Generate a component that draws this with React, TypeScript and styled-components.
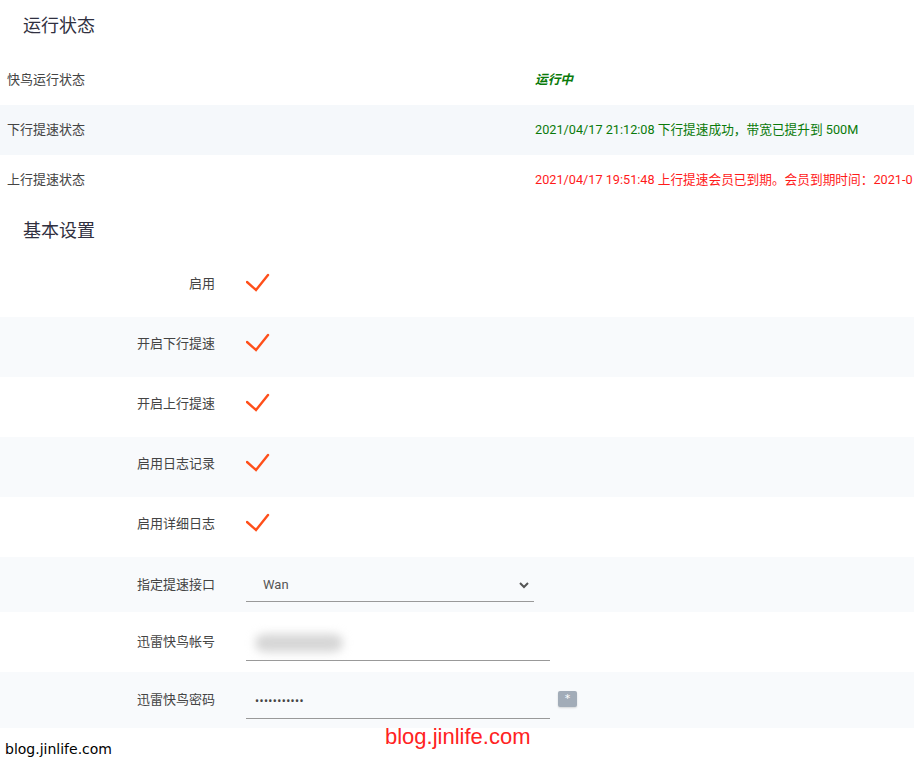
import React from 'react'
import styled, { createGlobalStyle } from 'styled-components'

const GlobalStyle = createGlobalStyle`
  html, body {
    margin: 0;
    padding: 0;
    background: #fff;
    overflow: hidden;
  }
  body {
    font-family: "Roboto", "Noto Sans CJK SC", sans-serif;
    color: #333;
  }
`

const Page = styled.div`
  position: relative;
  width: 914px;
  height: 766px;
  overflow: hidden;
`

const SectionTitle = styled.h3<{ $height: number }>`
  margin: 0;
  height: ${p => p.$height}px;
  padding: 0 0 0 23px;
  font-size: 18px;
  font-weight: 400;
  line-height: 48px;
  color: #303040;
  font-family: "Noto Sans CJK SC", sans-serif;
  box-sizing: border-box;
`

const StatusRow = styled.div<{ $striped?: boolean }>`
  display: grid;
  grid-template-columns: 535px 1fr;
  align-items: center;
  height: 50px;
  padding-bottom: 4px;
  box-sizing: border-box;
  background: ${p => (p.$striped ? '#f5f8fb' : '#fff')};
  white-space: nowrap;
`

const StatusLabel = styled.div`
  padding-left: 7px;
  font-size: 13px;
  color: #444;
  font-family: "Noto Sans CJK SC", sans-serif;
`

const StatusValue = styled.div<{ $tone: 'green' | 'red' | 'running' }>`
  font-size: 12.7px;
  color: ${p => (p.$tone === 'red' ? '#ff1a1a' : '#0a7a0a')};
  font-weight: ${p => (p.$tone === 'running' ? 700 : 400)};
  font-style: ${p => (p.$tone === 'running' ? 'italic' : 'normal')};
  overflow: hidden;
`

const SettingRow = styled.div<{ $striped?: boolean; $height: number; $lift?: number }>`
  display: grid;
  grid-template-columns: 215px 1fr;
  column-gap: 31px;
  align-items: center;
  height: ${p => p.$height}px;
  padding-bottom: ${p => p.$lift ?? 9}px;
  box-sizing: border-box;
  background: ${p => (p.$striped ? '#f8fafc' : '#fff')};
`

const SettingLabel = styled.label`
  text-align: right;
  font-size: 13px;
  color: #444;
  font-family: "Noto Sans CJK SC", sans-serif;
`

const Field = styled.div`
  display: flex;
  align-items: center;
  gap: 8px;
`

const Check = styled.svg`
  display: block;
  width: 24px;
  height: 20px;
`

const SelectBox = styled.div`
  width: 288px;
  height: 34px;
  box-sizing: border-box;
  border-bottom: 1px solid #999;
  display: flex;
  align-items: center;
  justify-content: space-between;
  padding: 0 4px 0 17px;
  font-size: 13px;
  color: #555;
  margin-top: 4px;
`

const InputBox = styled.div`
  width: 304px;
  height: 36px;
  box-sizing: border-box;
  border-bottom: 1px solid #999;
  display: flex;
  align-items: center;
  padding-left: 9px;
  font-size: 13px;
  color: #555;
  margin-top: 4px;
`

const Blurred = styled.span`
  display: inline-block;
  width: 88px;
  height: 18px;
  background: #d6d6d6;
  border-radius: 9px;
  filter: blur(5px);
  margin-top: 1px;
`

const Dots = styled.span`
  font-size: 12px;
  letter-spacing: 0.4px;
  color: #444;
  margin-top: 2px;
`

const RevealButton = styled.button`
  width: 19px;
  height: 16px;
  margin-top: 0;
  padding: 0;
  border: none;
  border-radius: 2px;
  background: #a2acb8;
  color: #fff;
  font-size: 11px;
  line-height: 16px;
  box-shadow: 0 1px 2px rgba(0, 0, 0, 0.15);
  font-family: "DejaVu Sans", sans-serif;
`

const Footer = styled.div`
  padding: 13px 0 0 5px;
  font-family: "DejaVu Sans", sans-serif;
  font-size: 14px;
  color: #000;
`

const Watermark = styled.div`
  position: absolute;
  left: 385px;
  top: 724px;
  font-family: "Liberation Sans", Arial, sans-serif;
  font-size: 22px;
  color: #f22;
`

const CheckMark = () => (
  <Check viewBox="0 0 24 20">
    <polyline points="1,9 10,17 22,2" fill="none" stroke="#ff4f1a" strokeWidth="2.4" strokeLinecap="round" strokeLinejoin="miter" />
  </Check>
)

const Chevron = () => (
  <svg width="12" height="8" viewBox="0 0 12 8">
    <polyline points="2,2 6,6 10,2" fill="none" stroke="#555" strokeWidth="2" />
  </svg>
)

const statusRows = [
  { label: '快鸟运行状态', value: '运行中', tone: 'running' as const },
  { label: '下行提速状态', value: '2021/04/17 21:12:08 下行提速成功，带宽已提升到 500M', tone: 'green' as const },
  { label: '上行提速状态', value: '2021/04/17 19:51:48 上行提速会员已到期。会员到期时间：2021-0', tone: 'red' as const },
]

const checkRows = ['启用', '开启下行提速', '开启上行提速', '启用日志记录', '启用详细日志']

const App = () => {
  return (
    <Page>
      <GlobalStyle />
      <SectionTitle $height={55}>运行状态</SectionTitle>
      {statusRows.map((r, i) => (
        <StatusRow key={r.label} $striped={i === 1}>
          <StatusLabel>{r.label}</StatusLabel>
          <StatusValue $tone={r.tone}>{r.value}</StatusValue>
        </StatusRow>
      ))}

      <SectionTitle $height={52}>基本设置</SectionTitle>
      {checkRows.map((label, i) => (
        <SettingRow key={label} $striped={i % 2 === 1} $height={60}>
          <SettingLabel>{label}</SettingLabel>
          <Field>
            <CheckMark />
          </Field>
        </SettingRow>
      ))}
      <SettingRow $striped $height={55} $lift={3}>
        <SettingLabel>指定提速接口</SettingLabel>
        <Field>
          <SelectBox>
            <span>Wan</span>
            <Chevron />
          </SelectBox>
        </Field>
      </SettingRow>
      <SettingRow $height={60} $lift={3}>
        <SettingLabel>迅雷快鸟帐号</SettingLabel>
        <Field>
          <InputBox>
            <Blurred />
          </InputBox>
        </Field>
      </SettingRow>
      <SettingRow $striped $height={56} $lift={3}>
        <SettingLabel>迅雷快鸟密码</SettingLabel>
        <Field>
          <InputBox>
            <Dots>•••••••••••</Dots>
          </InputBox>
          <RevealButton>*</RevealButton>
        </Field>
      </SettingRow>

      <Footer>blog.jinlife.com</Footer>
      <Watermark>blog.jinlife.com</Watermark>
    </Page>
  )
}

export default App
